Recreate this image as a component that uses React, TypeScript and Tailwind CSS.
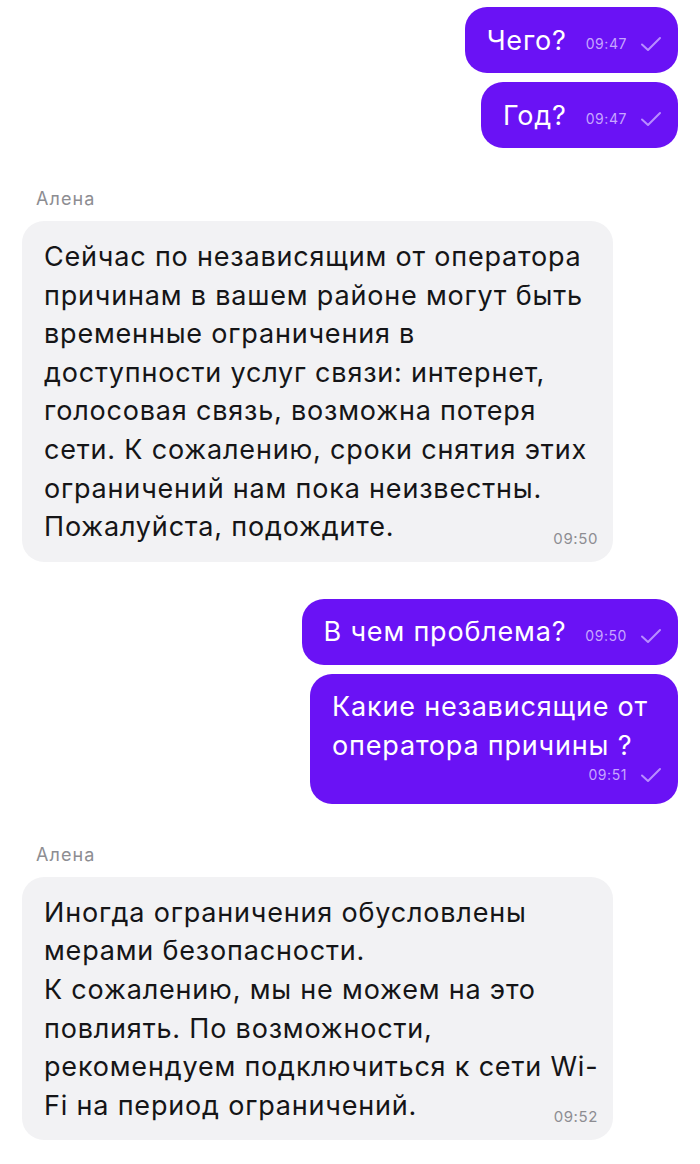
import React from 'react';

const FONT = { fontFamily: 'Inter, "Noto Sans", sans-serif' };

function Check() {
  return (
    <svg width="22" height="16" viewBox="0 0 22 16" fill="none" className="ml-[13px] shrink-0">
      <path d="M2 8.5 L8 14 L20 2" stroke="#b88dff" strokeWidth="2" strokeLinecap="round" strokeLinejoin="round" />
    </svg>
  );
}

function OutShort({ text, time }: { text: string; time: string }) {
  return (
    <div className="flex justify-end">
      <div className="flex h-[66px] items-center rounded-[22px] bg-[#6a12f5] pl-[22px] pr-[16px]">
        <span className="text-[27px] leading-none tracking-[0.03em] text-white">{text}</span>
        <span className="ml-[19px] mt-[8px] text-[14px] leading-none tracking-[0.04em] text-[#c7a6ff]">{time}</span>
        <span className="mt-[8px]">
          <Check />
        </span>
      </div>
    </div>
  );
}

function OutLong({ lines, time }: { lines: string[]; time: string }) {
  return (
    <div className="flex justify-end">
      <div className="flex flex-col rounded-[22px] bg-[#6a12f5] pb-[21px] pl-[22px] pr-[16px] pt-[13px]">
        {lines.map((l, i) => (
          <div key={i} className="whitespace-nowrap pr-[14px] text-[27px] leading-[39px] tracking-[0.03em] text-white">
            {l}
          </div>
        ))}
        <div className="mt-[2px] flex items-center justify-end">
          <span className="text-[14px] leading-none tracking-[0.04em] text-[#c7a6ff]">{time}</span>
          <Check />
        </div>
      </div>
    </div>
  );
}

function Incoming({ name, lines, time }: { name: string; lines: string[]; time: string }) {
  const last = lines[lines.length - 1];
  return (
    <div className="flex flex-col items-start">
      <div className="pl-[14px] text-[18px] leading-[22px] tracking-[0.06em] text-[#8d8d92]">{name}</div>
      <div className="mt-[11px] flex w-[591px] flex-col rounded-[22px] bg-[#f2f2f4] pb-[15px] pl-[22px] pr-[15px] pt-[17px]">
        {lines.slice(0, -1).map((l, i) => (
          <div key={i} className="whitespace-nowrap text-[27px] leading-[38.6px] tracking-[0.03em] text-[#151517]">
            {l}
          </div>
        ))}
        <div className="flex items-end justify-between">
          <span className="whitespace-nowrap text-[27px] leading-[38.6px] tracking-[0.03em] text-[#151517]">{last}</span>
          <span className="mb-[-2px] text-[15px] leading-[20px] tracking-[0.04em] text-[#8d8d92]">{time}</span>
        </div>
      </div>
    </div>
  );
}

export default function App() {
  return (
    <div className="flex min-h-[1164px] w-[700px] flex-col bg-white px-[22px] pt-[7px]" style={FONT}>
      <OutShort text="Чего?" time="09:47" />
      <div className="h-[9px]" />
      <OutShort text="Год?" time="09:47" />
      <div className="h-[40px]" />
      <Incoming
        name="Алена"
        time="09:50"
        lines={[
          'Сейчас по независящим от оператора',
          'причинам в вашем районе могут быть',
          'временные ограничения в',
          'доступности услуг связи: интернет,',
          'голосовая связь, возможна потеря',
          'сети. К сожалению, сроки снятия этих',
          'ограничений нам пока неизвестны.',
          'Пожалуйста, подождите.',
        ]}
      />
      <div className="h-[37px]" />
      <OutShort text="В чем проблема?" time="09:50" />
      <div className="h-[9px]" />
      <OutLong lines={['Какие независящие от', 'оператора причины ?']} time="09:51" />
      <div className="h-[40px]" />
      <Incoming
        name="Алена"
        time="09:52"
        lines={[
          'Иногда ограничения обусловлены',
          'мерами безопасности.',
          'К сожалению, мы не можем на это',
          'повлиять. По возможности,',
          'рекомендуем подключиться к сети Wi-',
          'Fi на период ограничений.',
        ]}
      />
    </div>
  );
}
